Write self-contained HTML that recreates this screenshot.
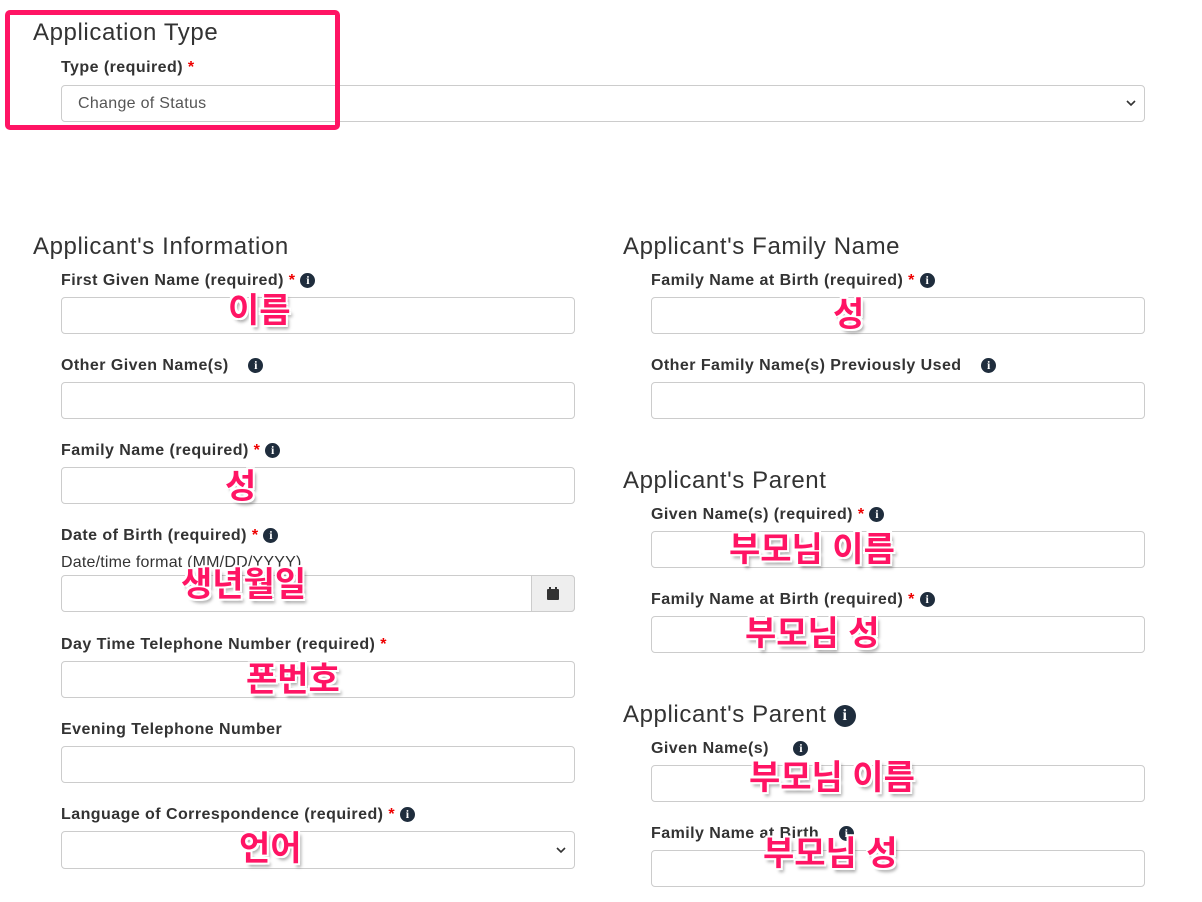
<!DOCTYPE html>
<html><head><meta charset="utf-8"><style>
body{margin:0;width:1202px;height:902px;background:#fff;position:relative;overflow:hidden;font-family:"Liberation Sans",sans-serif;color:#333}
.a{position:absolute}
.h{font-size:24px;color:#333;line-height:28px;letter-spacing:0.6px}
.l{font-size:16px;font-weight:bold;color:#333;line-height:18px;letter-spacing:0.45px}
.r{color:#e00}
.in{border:1px solid #ccc;border-radius:4px;background:#fff;box-sizing:border-box;height:37px}
.i{display:inline-block;width:15px;height:15px;border-radius:50%;background:#1f2d3d;color:#fff;font-size:12px;font-weight:bold;text-align:center;line-height:15px;font-family:"Liberation Serif",serif;vertical-align:1px;letter-spacing:0}
.k{font-family:"Liberation Sans","Noto Sans CJK KR",sans-serif;font-size:34px;font-weight:bold;color:#ff1464;line-height:38px;white-space:nowrap;text-shadow:2px 2px 0 #fff,-2px -2px 0 #fff,2px -2px 0 #fff,-2px 2px 0 #fff,3px 4px 3px rgba(0,0,0,.35)}
.sel{font-size:16px;color:#555;padding-left:16px;line-height:35px;letter-spacing:0.3px}
.car{position:absolute;right:8px;top:13px}
</style></head><body>
<div class="a h" style="left:33px;top:19px">Application Type</div>
<div class="a l" style="left:61px;top:59px">Type (required) <span class="r">*</span></div>
<div class="a in sel" style="left:61px;top:85px;width:1084px">Change of Status<svg class="car" width="10" height="8" viewBox="0 0 10 8"><path d="M1 2l4 4 4-4" fill="none" stroke="#333" stroke-width="1.6"/></svg></div>
<div class="a" style="left:5px;top:10px;width:325px;height:110px;border:5px solid #ff1464;border-radius:5px"></div>

<div class="a h" style="left:33px;top:233px">Applicant's Information</div>
<div class="a l" style="left:61px;top:272px">First Given Name (required) <span class="r">*</span> <span class="i">i</span></div>
<div class="a in" style="left:61px;top:297px;width:514px"></div>
<div class="a l" style="left:61px;top:357px">Other Given Name(s) &nbsp;&nbsp; <span class="i">i</span></div>
<div class="a in" style="left:61px;top:382px;width:514px"></div>
<div class="a l" style="left:61px;top:442px">Family Name (required) <span class="r">*</span> <span class="i">i</span></div>
<div class="a in" style="left:61px;top:467px;width:514px"></div>
<div class="a l" style="left:61px;top:527px">Date of Birth (required) <span class="r">*</span> <span class="i">i</span></div>
<div class="a" style="left:61px;top:554px;font-size:16px;color:#333;letter-spacing:0.2px">Date/time format (MM/DD/YYYY)</div>
<div class="a in" style="left:61px;top:575px;width:514px"></div>
<div class="a" style="left:531px;top:575px;width:44px;height:37px;background:#eee;border:1px solid #ccc;border-radius:0 4px 4px 0;box-sizing:border-box"><div style="position:absolute;left:15px;top:13px;width:12px;height:11px;background:#333;border-radius:1px"></div><div style="position:absolute;left:17px;top:11px;width:2px;height:3px;background:#333"></div><div style="position:absolute;left:23px;top:11px;width:2px;height:3px;background:#333"></div></div>
<div class="a l" style="left:61px;top:636px">Day Time Telephone Number (required) <span class="r">*</span></div>
<div class="a in" style="left:61px;top:661px;width:514px"></div>
<div class="a l" style="left:61px;top:721px">Evening Telephone Number</div>
<div class="a in" style="left:61px;top:746px;width:514px"></div>
<div class="a l" style="left:61px;top:806px">Language of Correspondence (required) <span class="r">*</span> <span class="i">i</span></div>
<div class="a in" style="left:61px;top:831px;width:514px;height:38px"><svg class="car" style="top:14px" width="10" height="8" viewBox="0 0 10 8"><path d="M1 2l4 4 4-4" fill="none" stroke="#333" stroke-width="1.6"/></svg></div>

<div class="a h" style="left:623px;top:233px">Applicant's Family Name</div>
<div class="a l" style="left:651px;top:272px">Family Name at Birth (required) <span class="r">*</span> <span class="i">i</span></div>
<div class="a in" style="left:651px;top:297px;width:494px"></div>
<div class="a l" style="left:651px;top:357px">Other Family Name(s) Previously Used &nbsp;&nbsp; <span class="i">i</span></div>
<div class="a in" style="left:651px;top:382px;width:494px"></div>
<div class="a h" style="left:623px;top:467px">Applicant's Parent</div>
<div class="a l" style="left:651px;top:506px">Given Name(s) (required) <span class="r">*</span> <span class="i">i</span></div>
<div class="a in" style="left:651px;top:531px;width:494px"></div>
<div class="a l" style="left:651px;top:591px">Family Name at Birth (required) <span class="r">*</span> <span class="i">i</span></div>
<div class="a in" style="left:651px;top:616px;width:494px"></div>
<div class="a h" style="left:623px;top:701px">Applicant's Parent <span class="i" style="width:22px;height:22px;line-height:22px;font-size:16px;vertical-align:2px">i</span></div>
<div class="a l" style="left:651px;top:740px">Given Name(s) &nbsp;&nbsp;&nbsp; <span class="i">i</span></div>
<div class="a in" style="left:651px;top:765px;width:494px"></div>
<div class="a l" style="left:651px;top:825px">Family Name at Birth &nbsp;&nbsp; <span class="i">i</span></div>
<div class="a in" style="left:651px;top:850px;width:494px"></div>

<div class="a k" style="left:228px;top:292px">이름</div>
<div class="a k" style="left:225px;top:468px">성</div>
<div class="a k" style="left:181px;top:566px">생년월일</div>
<div class="a k" style="left:246px;top:661px">폰번호</div>
<div class="a k" style="left:239px;top:830px">언어</div>
<div class="a k" style="left:833px;top:296px">성</div>
<div class="a k" style="left:729px;top:531px">부모님 이름</div>
<div class="a k" style="left:745px;top:615px">부모님 성</div>
<div class="a k" style="left:749px;top:759px">부모님 이름</div>
<div class="a k" style="left:763px;top:835px">부모님 성</div>
</body></html>
